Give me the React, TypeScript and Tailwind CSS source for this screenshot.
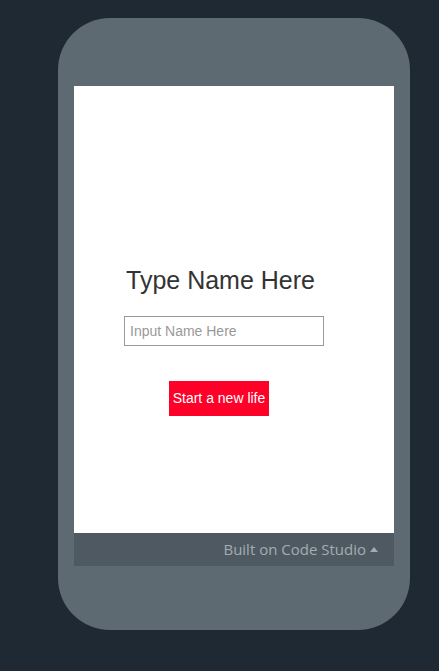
import React from 'react';

const App: React.FC = () => (
  <div className="w-[439px] h-[671px] bg-[#1f2933] pl-[58px] pt-[18px] overflow-hidden">
    <div className="w-[352px] h-[612px] rounded-[52px] bg-[#5e6a72] pt-[68px] pl-[16px]">
      <div className="w-[320px] h-[447px] bg-white relative font-['Liberation_Sans',Arial,sans-serif]">
        <div className="flex flex-col items-start">
          <h1 className="mt-[179px] ml-[52px] text-[25px] leading-[30px] text-[#333333]">Type Name Here</h1>
          <input
            className="mt-[21px] ml-[50px] w-[200px] h-[30px] border border-[#999999] px-[5px] text-[14px] text-[#333] placeholder:text-[#999999] outline-none"
            placeholder="Input Name Here"
          />
          <button className="mt-[35px] ml-[95px] w-[100px] h-[35px] bg-[#ff0029] text-white text-[14px]">
            Start a new life
          </button>
        </div>
      </div>
      <div className="w-[320px] h-[33px] bg-[#4e5961] flex items-center justify-end pr-[16px] gap-[4px] font-['Open_Sans',sans-serif] text-[15px] text-[#a3adb4]">
        <span>Built on Code Studio</span>
        <span className="w-0 h-0 border-l-[4px] border-r-[4px] border-b-[5px] border-l-transparent border-r-transparent border-b-[#a3adb4]" />
      </div>
    </div>
  </div>
);

export default App;
